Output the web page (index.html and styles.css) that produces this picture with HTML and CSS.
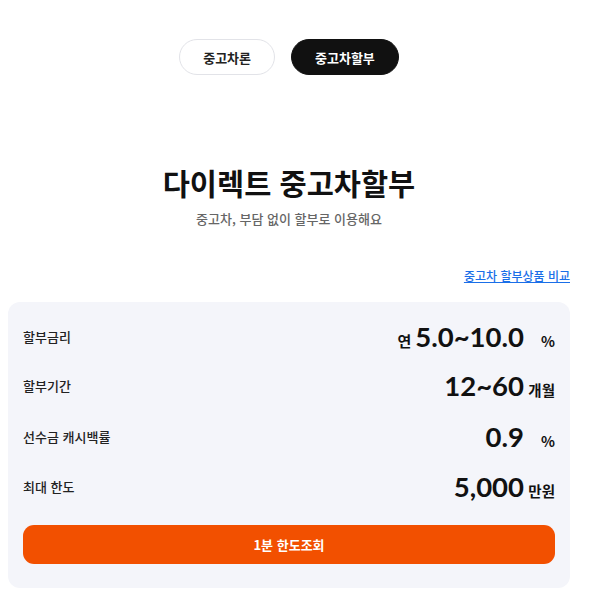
FILE: index.html
```html
<!DOCTYPE html>
<html lang="ko">
<head>
<meta charset="utf-8">
<link rel="stylesheet" href="styles.css">
</head>
<body>
<div class="page">
  <div class="tabs">
    <span class="tab">중고차론</span>
    <span class="tab active">중고차할부</span>
  </div>
  <h1 class="title">다이렉트 중고차할부</h1>
  <p class="subtitle">중고차, 부담 없이 할부로 이용해요</p>
  <div class="link-row"><a class="compare" href="#">중고차 할부상품 비교</a></div>
  <div class="card">
    <div class="row row-rate">
      <span class="label">할부금리</span>
      <span class="value"><span class="prefix">연</span><span class="num">5.0~10.0</span><span class="unit">%</span></span>
    </div>
    <div class="row row-term">
      <span class="label">할부기간</span>
      <span class="value"><span class="num">12~60</span><span class="unit">개월</span></span>
    </div>
    <div class="row">
      <span class="label">선수금 캐시백률</span>
      <span class="value"><span class="num">0.9</span><span class="unit">%</span></span>
    </div>
    <div class="row">
      <span class="label">최대 한도</span>
      <span class="value"><span class="num">5,000</span><span class="unit">만원</span></span>
    </div>
    <button class="cta">1분 한도조회</button>
  </div>
</div>
</body>
</html>
```

FILE: styles.css
```css
* { box-sizing: border-box; }
html, body { margin: 0; padding: 0; background: #fff; }
body {
  font-family: "Noto Sans CJK KR", "Noto Sans", sans-serif;
  color: #111;
}
.page {
  width: 562px;
  margin-left: 8px;
  padding-top: 39px;
}
.tabs {
  display: flex;
  justify-content: center;
  gap: 16px;
}
.tab {
  display: flex;
  align-items: center;
  justify-content: center;
  height: 36px;
  padding: 0 23px;
  border: 1px solid #e2e3e8;
  border-radius: 18px;
  font-size: 13px;
  font-weight: 700;
  color: #222;
  background: #fff;
}
.tab.active {
  background: #111;
  border-color: #111;
  color: #fff;
}
.title {
  margin: 87px 0 0;
  text-align: center;
  font-size: 29.5px;
  font-weight: 700;
  line-height: 40px;
  color: #111;
}
.subtitle {
  margin: 8px 0 0;
  text-align: center;
  font-size: 13px;
  line-height: 18px;
  color: #666;
  font-weight: 500;
}
.link-row {
  margin-top: 39px;
  display: flex;
  justify-content: flex-end;
}
.compare {
  font-size: 12px;
  line-height: 18px;
  color: #1a6fe8;
  font-weight: 500;
  text-decoration: underline;
}
.card {
  margin-top: 17px;
  background: #f4f5fa;
  border-radius: 12px;
  padding: 11px 15px 24px;
}
.row {
  display: flex;
  align-items: center;
  justify-content: space-between;
  height: 50px;
}
.row-rate { height: 46px; }
.row-term { height: 52px; }
.label {
  font-size: 13px;
  font-weight: 500;
  color: #222;
}
.value {
  display: flex;
  align-items: baseline;
}
.prefix {
  font-size: 15px;
  font-weight: 700;
  margin-right: 4px;
}
.num {
  font-family: Lato, "Noto Sans", sans-serif;
  font-size: 27.5px;
  font-weight: 700;
  color: #111;
}
.unit {
  display: inline-block;
  width: 31px;
  text-align: right;
  font-size: 14.5px;
  font-weight: 700;
}
.cta {
  display: block;
  width: 100%;
  height: 39px;
  margin-top: 14px;
  border: none;
  border-radius: 11px;
  background: #f25000;
  color: #fff;
  font-family: "Noto Sans CJK KR", "Noto Sans", sans-serif;
  font-size: 13px;
  font-weight: 700;
}
```
